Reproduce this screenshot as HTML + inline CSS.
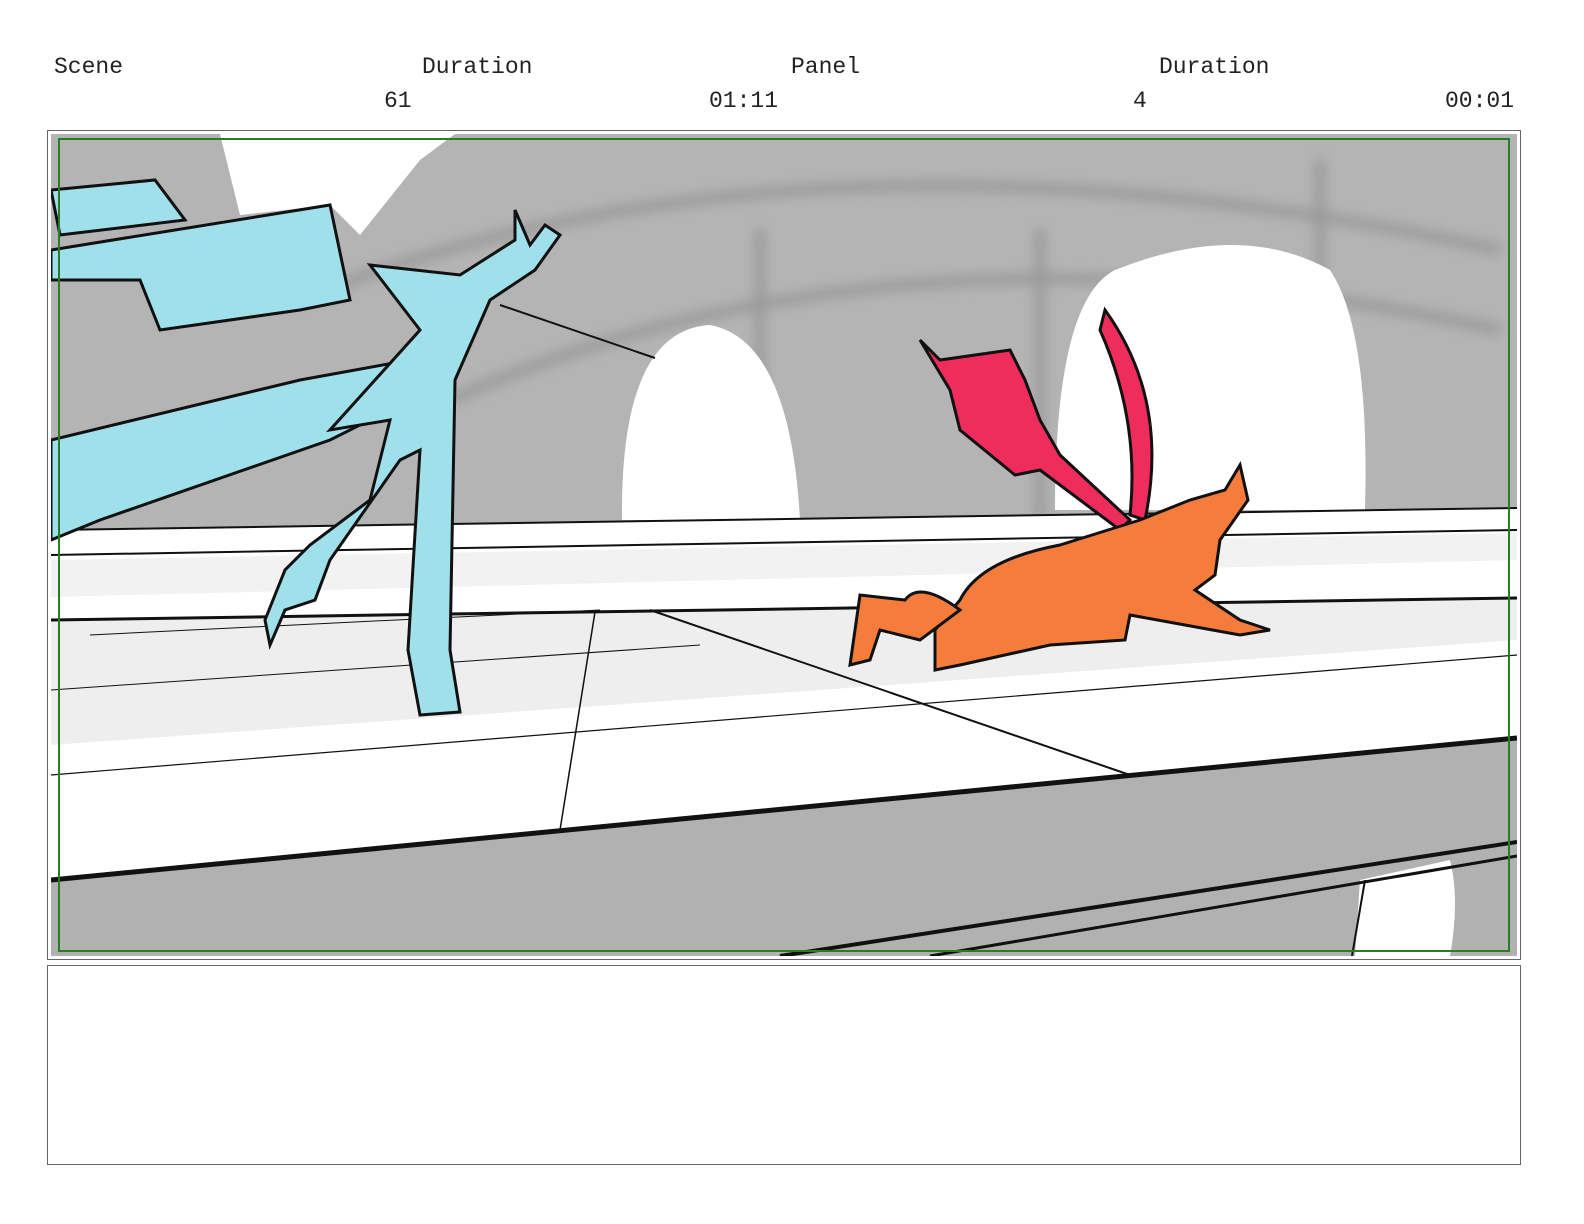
<!DOCTYPE html>
<html><head><style>
body{margin:0;width:1584px;height:1224px;background:#fff;position:relative;overflow:hidden;font-family:"Liberation Mono",monospace;font-size:23px;color:#222}
.t{position:absolute;white-space:pre}
</style></head><body>
<div class="t" style="left:54px;top:54px">Scene</div>
<div class="t" style="left:422px;top:54px">Duration</div>
<div class="t" style="left:791px;top:54px">Panel</div>
<div class="t" style="left:1159px;top:54px">Duration</div>
<div class="t" style="left:384px;top:88px">61</div>
<div class="t" style="left:709px;top:88px">01:11</div>
<div class="t" style="left:1133px;top:88px">4</div>
<div class="t" style="left:1445px;top:88px">00:01</div>
<div style="position:absolute;left:47px;top:130px;width:1472px;height:828px;border:1px solid #666"></div>
<svg style="position:absolute;left:51px;top:134px" width="1466" height="822" viewBox="51 134 1466 822">
<defs><filter id="b"><feGaussianBlur stdDeviation="6"/></filter></defs>
<rect x="51" y="134" width="1466" height="822" fill="#b4b4b4"/>
<g filter="url(#b)" fill="none" stroke="#999" stroke-width="10">
<path d="M300 300 Q800 100 1500 250"/><path d="M450 400 Q900 200 1500 330"/><path d="M760 230 V520 M1040 230 V520 M1320 160 V520"/>
</g>
<path d="M220 134 L240 215 L330 205 L360 235 L420 160 L455 134Z" fill="#fff"/>
<path d="M622 520 Q620 330 710 325 Q790 340 800 520Z" fill="#fff"/>
<path d="M1055 510 Q1055 300 1115 270 Q1240 220 1330 270 Q1370 330 1365 510Z" fill="#fff"/>
<path d="M51 530 L1517 508 L1517 740 L51 882Z" fill="#fff"/>
<path d="M51 560 L1517 533 L1517 560 L51 597Z" fill="#f2f2f2"/>
<path d="M51 620 L1517 598 L1517 640 L51 745Z" fill="#eeeeee"/>
<path d="M51 880 L1517 738 L1517 956 L51 956Z" fill="#b1b1b1"/>
<path d="M1360 880 L1450 860 Q1460 900 1450 956 L1355 956Z" fill="#fff"/>
<g stroke="#111" fill="none">
<path d="M51 530 L1517 508" stroke-width="2"/><path d="M51 555 L1517 530" stroke-width="2"/>
<path d="M51 620 L1517 598" stroke-width="3"/>
<path d="M51 880 L1517 738" stroke-width="5"/>
<path d="M780 956 L1517 842" stroke-width="4"/><path d="M930 956 L1517 856" stroke-width="3"/>
<path d="M650 610 L1130 775" stroke-width="2"/><path d="M595 612 L560 830" stroke-width="1.5"/>
<path d="M51 775 L1517 655" stroke-width="1.2"/><path d="M1365 880 L1352 956" stroke-width="2"/>
<path d="M51 690 L700 645" stroke-width="1"/><path d="M90 635 L600 610" stroke-width="1"/>
<path d="M500 305 L655 358" stroke-width="2"/>
</g>
<g stroke="#111" stroke-width="3" fill="#a0e0ea">
<path d="M51 190 L155 180 L185 220 L60 235 Z"/>
<path d="M51 250 L330 205 L350 300 L300 310 L160 330 L140 280 L51 280Z"/>
<path d="M51 440 L300 380 L410 360 L430 390 L330 440 L100 520 L51 540Z"/>
<path d="M370 265 L460 275 L515 240 L515 210 L530 245 L545 225 L560 235 L535 270 L490 300 L455 380 L450 650 L460 712 L420 715 L408 650 L420 450 L400 460 L330 560 L315 600 L285 610 L270 645 L265 620 L285 570 L310 545 L370 500 L390 420 L330 430 L420 330Z"/>
</g>
<g stroke="#111" stroke-width="3" fill="#ee2d5c">
<path d="M920 340 L940 360 L1010 350 L1025 380 L1040 420 L1060 455 L1130 520 L1120 530 L1040 470 L1015 475 L960 430 L950 390Z"/>
<path d="M1105 310 Q1170 400 1145 520 L1130 515 Q1140 420 1100 330Z"/>
</g>
<g stroke="#111" stroke-width="3" fill="#f57c3a">
<path d="M1060 545 L1140 520 L1190 500 L1225 490 L1240 465 L1248 500 L1220 540 L1215 575 L1195 590 L1240 620 L1270 630 L1240 635 L1185 625 L1130 615 L1125 640 L1050 645 L960 665 L935 670 L935 630 L960 600 Q980 560 1060 545Z"/>
<path d="M960 610 Q920 580 905 600 L860 595 L850 665 L870 660 L880 630 L920 640Z"/>
</g>
<rect x="59" y="139" width="1450" height="812" fill="none" stroke="#2a7a2a" stroke-width="2"/>
</svg>
<div style="position:absolute;left:47px;top:965px;width:1472px;height:198px;border:1px solid #666"></div>
</body></html>
